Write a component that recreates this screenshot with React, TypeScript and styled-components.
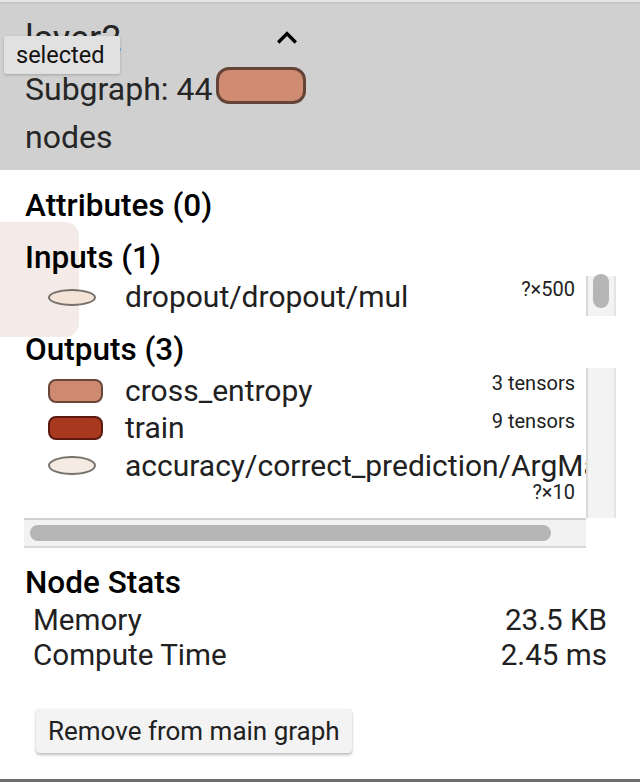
import React from "react";
import styled, { createGlobalStyle } from "styled-components";

const Global = createGlobalStyle`
  html, body { margin: 0; padding: 0; background: #fff; }
  body { font-family: Roboto, "Liberation Sans", Arial, sans-serif; }
  * { box-sizing: border-box; }
`;

const Card = styled.div`
  position: relative;
  width: 640px;
  height: 782px;
  border-top: 2px solid #e3e3e3;
  border-bottom: 3px solid #6e6e6e;
  overflow: hidden;
  background: #fff;
  display: flex;
  flex-direction: column;
`;

const Header = styled.header`
  background: #d0d0d0;
  border-top: 2px solid #c6c6c6;
  padding: 14px 0 9px 25px;
  color: #262626;
`;

const HeaderInner = styled.div`
  width: 285px;
`;

const TitleRow = styled.div`
  display: flex;
  align-items: center;
  justify-content: space-between;
  height: 40px;
`;

const Title = styled.div`
  font-size: 36px;
  line-height: 40px;
  margin-top: 2px;
`;

const Chevron = styled.svg`
  width: 40px;
  height: 40px;
  margin-right: 3px;
  flex: none;
`;

const Subgraph = styled.div`
  margin-top: 7px;
  font-size: 32px;
  line-height: 48px;
`;

const HeaderPill = styled.span`
  display: inline-block;
  width: 90px;
  height: 37px;
  margin-left: 4px;
  vertical-align: -4px;
  border: 3px solid #644436;
  background: #d08c73;
  border-radius: 13px;
`;

const Tooltip = styled.div`
  position: absolute;
  left: 4px;
  top: 34px;
  z-index: 3;
  width: 116px;
  height: 38px;
  padding-left: 12px;
  background: #e1e1e1;
  border-radius: 2px;
  box-shadow: 0 1px 3px rgba(0, 0, 0, 0.22);
  font-size: 23.5px;
  line-height: 38px;
  color: #111;
  white-space: nowrap;
`;

const GhostNode = styled.div`
  position: absolute;
  left: -20px;
  top: 220px;
  width: 99px;
  height: 115px;
  border-radius: 14px;
  background: #f4ebe9;
  z-index: 0;
`;

const Body = styled.main`
  position: relative;
  z-index: 1;
  flex: 1;
  padding: 18px 24px 0;
  display: flex;
  flex-direction: column;
`;

const Section = styled.section<{ $gap?: number }>`
  margin-bottom: ${(p) => p.$gap ?? 16}px;
`;

const SectionTitle = styled.h2`
  margin: 0 0 0 1px;
  font-size: 31.5px;
  font-weight: 500;
  line-height: 36px;
  color: #000;
`;

const ListFrame = styled.div`
  display: grid;
  grid-template-columns: 1fr 30px;
`;

const Viewport = styled.div<{ $h: number; $pt: number }>`
  height: ${(p) => p.$h}px;
  padding-top: ${(p) => p.$pt}px;
  overflow: hidden;
`;

const VTrack = styled.div`
  border-left: 2px solid #dadada;
  border-right: 2px solid #e4e4e4;
  background: #f3f3f3;
  display: flex;
  justify-content: center;
`;

const VThumb = styled.div`
  width: 16px;
  height: 34px;
  margin-top: -2px;
  border-radius: 8px;
  background: #b5b5b5;
`;

const HTrack = styled.div`
  height: 30px;
  border-top: 2px solid #d2d2d2;
  border-bottom: 2px solid #d8d8d8;
  background: #f2f2f2;
  padding-left: 6px;
  display: flex;
  align-items: center;
`;

const HThumb = styled.div`
  width: 521px;
  height: 16px;
  border-radius: 8px;
  background: #b5b5b5;
`;

const Row = styled.div<{ $h: number }>`
  display: flex;
  align-items: center;
  height: ${(p) => p.$h}px;
  padding: 0 11px 0 24px;
`;

const IconCell = styled.div`
  width: 77px;
  flex: none;
  display: flex;
  align-items: center;
`;

const Name = styled.div`
  flex: 1;
  font-size: 30px;
  line-height: 36px;
  white-space: nowrap;
  color: #212121;
`;

const Meta = styled.div`
  align-self: flex-start;
  flex: none;
  margin-left: 8px;
  font-size: 20px;
  line-height: 22px;
  color: #212121;
`;

const MetaBelow = styled.div`
  margin-top: -4px;
  padding-right: 11px;
  text-align: right;
  font-size: 20px;
  line-height: 22px;
  color: #212121;
`;

const Ellipse = styled.span<{ $h: number; $fill: string }>`
  display: block;
  width: 48px;
  height: ${(p) => p.$h}px;
  border: 2px solid #77716b;
  border-radius: 50%;
  background: ${(p) => p.$fill};
`;

const Pill = styled.span<{ $fill: string; $stroke: string }>`
  display: block;
  width: 55px;
  height: 24px;
  border: 2px solid ${(p) => p.$stroke};
  border-radius: 8px;
  background: ${(p) => p.$fill};
`;

const StatRow = styled.div`
  display: flex;
  justify-content: space-between;
  padding: 0 9px;
  font-size: 29.6px;
  line-height: 35px;
  color: #212121;
`;

const Stats = styled.div`
  margin-top: 2px;
`;

const ActionButton = styled.button`
  align-self: flex-start;
  margin: 36px 0 0 12px;
  height: 44px;
  padding: 0 12px;
  border: none;
  border-radius: 4px;
  background: #f3f3f3;
  box-shadow: 0 2px 3px rgba(0, 0, 0, 0.25), 0 0 1px rgba(0, 0, 0, 0.15);
  font-family: inherit;
  font-size: 26px;
  color: #212121;
`;

export default function App() {
  return (
    <>
      <Global />
      <Card>
        <Header>
          <HeaderInner>
            <TitleRow>
              <Title>layer2</Title>
              <Chevron viewBox="0 0 24 24">
                <path d="M12 8l-6 6 1.41 1.41L12 10.83l4.59 4.58L18 14z" fill="#000" />
              </Chevron>
            </TitleRow>
            <Subgraph>
              Subgraph: 44<HeaderPill /> nodes
            </Subgraph>
          </HeaderInner>
        </Header>
        <Tooltip>selected</Tooltip>
        <GhostNode />
        <Body>
          <Section>
            <SectionTitle>Attributes (0)</SectionTitle>
          </Section>
          <Section>
            <SectionTitle>Inputs (1)</SectionTitle>
            <ListFrame>
              <Viewport $h={40} $pt={2}>
                <Row $h={38}>
                  <IconCell>
                    <Ellipse $h={17} $fill="#f4e4d8" />
                  </IconCell>
                  <Name>dropout/dropout/mul</Name>
                  <Meta>?×500</Meta>
                </Row>
              </Viewport>
              <VTrack>
                <VThumb />
              </VTrack>
            </ListFrame>
          </Section>
          <Section $gap={17}>
            <SectionTitle>Outputs (3)</SectionTitle>
            <ListFrame>
              <Viewport $h={150} $pt={4}>
                <Row $h={37.5}>
                  <IconCell>
                    <Pill $fill="#ce8a70" $stroke="#6b4537" />
                  </IconCell>
                  <Name>cross_entropy</Name>
                  <Meta>3 tensors</Meta>
                </Row>
                <Row $h={37.5}>
                  <IconCell>
                    <Pill $fill="#a8391e" $stroke="#5a1a0e" />
                  </IconCell>
                  <Name>train</Name>
                  <Meta>9 tensors</Meta>
                </Row>
                <Row $h={37.5}>
                  <IconCell>
                    <Ellipse $h={19} $fill="#f5ebe2" />
                  </IconCell>
                  <Name>accuracy/correct_prediction/ArgMax</Name>
                </Row>
                <MetaBelow>?×10</MetaBelow>
              </Viewport>
              <VTrack />
              <HTrack>
                <HThumb />
              </HTrack>
            </ListFrame>
          </Section>
          <Section $gap={0}>
            <SectionTitle>Node Stats</SectionTitle>
            <Stats>
              <StatRow>
                <span>Memory</span>
                <span>23.5 KB</span>
              </StatRow>
              <StatRow>
                <span>Compute Time</span>
                <span>2.45 ms</span>
              </StatRow>
            </Stats>
          </Section>
          <ActionButton>Remove from main graph</ActionButton>
        </Body>
      </Card>
    </>
  );
}
